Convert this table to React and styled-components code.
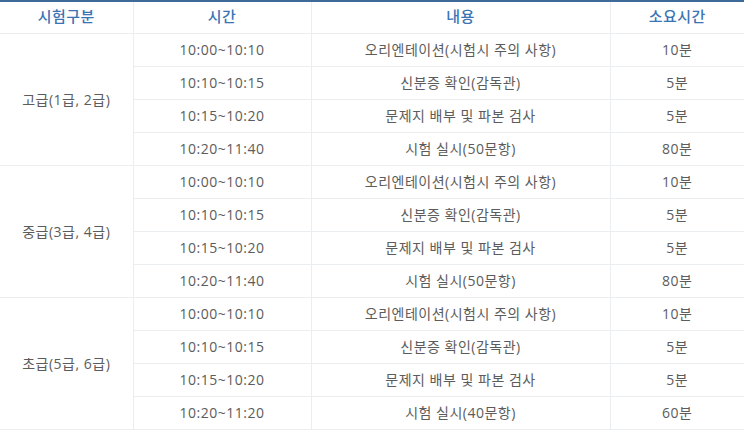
import React from 'react';
import styled, { createGlobalStyle } from 'styled-components';

const GlobalStyle = createGlobalStyle`
  html, body { margin: 0; padding: 0; background: #fff; }
  body { font-family: "Open Sans", "Noto Sans CJK KR", sans-serif; }
`;

const Table = styled.table`
  width: 744px;
  border-collapse: collapse;
  table-layout: fixed;
  border-top: 2px solid #3d6a99;
  font-size: 14px;
  line-height: 18px;
  letter-spacing: 0.5px;
  color: #5c5c5c;
`;

const HeadCell = styled.th`
  height: 28px;
  padding: 0 0 3px;
  font-weight: 500;
  font-size: 15px;
  color: #3a74b4;
  text-align: center;
  border-bottom: 1px solid #eaeef1;
  border-left: ${p => (p.first ? 'none' : '1px solid #eaeef1')};
`;

const Cell = styled.td`
  height: 32px;
  padding: 0;
  text-align: center;
  vertical-align: middle;
  border-bottom: 1px solid #eaeef1;
  border-left: ${p => (p.first ? 'none' : '1px solid #eaeef1')};
`;

const steps = (last) => [
  ['10:00~10:10', '오리엔테이션(시험시 주의 사항)', '10분'],
  ['10:10~10:15', '신분증 확인(감독관)', '5분'],
  ['10:15~10:20', '문제지 배부 및 파본 검사', '5분'],
  last,
];

const groups = [
  { name: '고급(1급, 2급)', rows: steps(['10:20~11:40', '시험 실시(50문항)', '80분']) },
  { name: '중급(3급, 4급)', rows: steps(['10:20~11:40', '시험 실시(50문항)', '80분']) },
  { name: '초급(5급, 6급)', rows: steps(['10:20~11:20', '시험 실시(40문항)', '60분']) },
];

export default function App() {
  return (
    <>
      <GlobalStyle />
      <Table>
        <colgroup>
          <col style={{ width: 133 }} />
          <col style={{ width: 178 }} />
          <col style={{ width: 299 }} />
          <col style={{ width: 134 }} />
        </colgroup>
        <thead>
          <tr>
            <HeadCell first>시험구분</HeadCell>
            <HeadCell>시간</HeadCell>
            <HeadCell>내용</HeadCell>
            <HeadCell>소요시간</HeadCell>
          </tr>
        </thead>
        <tbody>
          {groups.map(g =>
            g.rows.map((r, i) => (
              <tr key={g.name + i}>
                {i === 0 && (
                  <Cell first rowSpan={g.rows.length}>{g.name}</Cell>
                )}
                <Cell>{r[0]}</Cell>
                <Cell>{r[1]}</Cell>
                <Cell>{r[2]}</Cell>
              </tr>
            ))
          )}
        </tbody>
      </Table>
    </>
  );
}
